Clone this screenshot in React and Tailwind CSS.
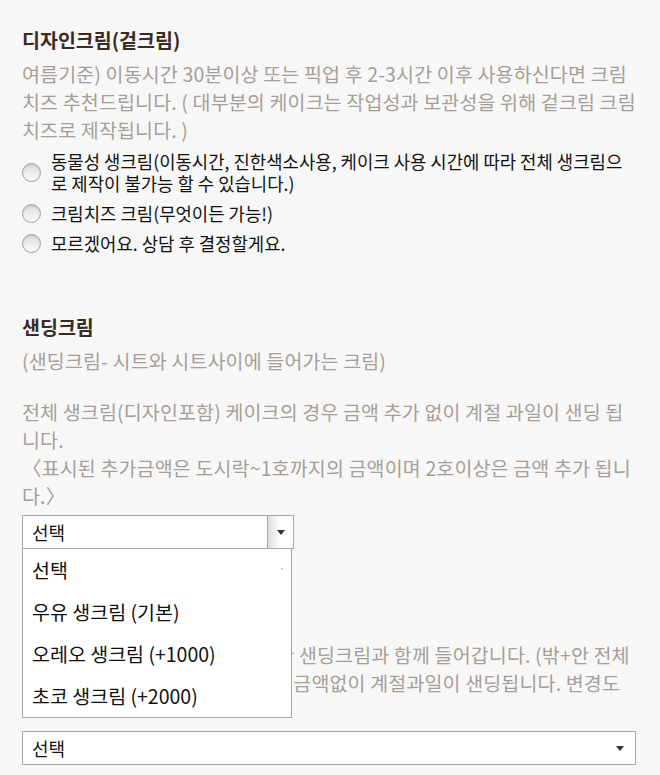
import React from "react";

const radioOptions = [
  "동물성 생크림(이동시간, 진한색소사용, 케이크 사용 시간에 따라 전체 생크림으로 제작이 불가능 할 수 있습니다.)",
  "크림치즈 크림(무엇이든 가능!)",
  "모르겠어요. 상담 후 결정할게요.",
];

const sandingOptions = ["선택", "우유 생크림 (기본)", "오레오 생크림 (+1000)", "초코 생크림 (+2000)"];

const Radio = ({ label }) => (
  <label className="flex items-center gap-[10px] text-[17.8px] leading-[22px] text-[#111]">
    <span className="shrink-0 w-[19px] h-[19px] rounded-full border border-[#a3a3a3] bg-gradient-to-b from-[#dcdcdc] to-[#fbfbfb] shadow-[inset_0_1px_2px_rgba(0,0,0,0.12)]" />
    <span>{label}</span>
  </label>
);

const SelectBox = ({ wide, boxed }) => (
  <div
    className={`flex items-center h-[34px] bg-white border border-[#a6a6a6] ${
      wide ? "w-full" : "w-[272px]"
    }`}
  >
    <span className="flex-1 pl-[9px] text-[18px] text-[#111]">선택</span>
    {boxed ? (
      <span className="flex items-center justify-center w-[26px] h-full border-l border-[#a6a6a6] bg-gradient-to-r from-[#dedede] via-white to-white">
        <span className="w-0 h-0 border-l-[4px] border-r-[4px] border-t-[5px] border-l-transparent border-r-transparent border-t-[#333]" />
      </span>
    ) : (
      <span className="flex items-center justify-center w-[30px] h-full">
        <span className="w-0 h-0 border-l-[4px] border-r-[4px] border-t-[5px] border-l-transparent border-r-transparent border-t-[#333]" />
      </span>
    )}
  </div>
);

export default function App() {
  return (
    <div
      className="min-h-[775px] bg-[#f7f7f7] pl-[22px] pr-[24px] pt-[26px]"
      style={{ fontFamily: '"Noto Sans CJK KR", "Noto Sans", sans-serif' }}
    >
      {/* 디자인크림 */}
      <h3 className="text-[19.5px] leading-[28px] font-bold text-[#3a2a1f]">디자인크림(겉크림)</h3>
      <p className="mt-[6px] text-[19.5px] leading-[28px] tracking-[0.15px] text-[#a69e98]">
        여름기준) 이동시간 30분이상 또는 픽업 후 2-3시간 이후 사용하신다면 크림치즈 추천드립니다. ( 대부분의 케이크는
        작업성과 보관성을 위해 겉크림 크림치즈로 제작됩니다. )
      </p>
      <div className="mt-[6px] flex flex-col gap-[8px]">
        {radioOptions.map((o) => (
          <Radio key={o} label={o} />
        ))}
      </div>

      {/* 샌딩크림 */}
      <h3 className="mt-[59px] text-[19.5px] leading-[28px] font-bold text-[#3a2a1f]">샌딩크림</h3>
      <p className="mt-[6px] text-[19.5px] leading-[28px] tracking-[0.15px] text-[#a69e98]">
        (샌딩크림- 시트와 시트사이에 들어가는 크림)
      </p>
      <p className="mt-[23px] text-[19.5px] leading-[28px] tracking-[0.15px] text-[#a69e98]">
        전체 생크림(디자인포함) 케이크의 경우 금액 추가 없이 계절 과일이 샌딩 됩니다.
        <br />
        〈표시된 추가금액은 도시락~1호까지의 금액이며 2호이상은 금액 추가 됩니다.〉
      </p>
      <div className="relative mt-[5px]">
        <SelectBox boxed />
        <ul className="absolute left-0 top-[33px] z-10 w-[270px] bg-white border border-[#a6a6a6]">
          {sandingOptions.map((o, i) => (
            <li key={o} className="relative h-[42px] flex items-center pl-[9px] text-[19.5px] text-[#111]">
              {o}
              {i === 0 && <span className="absolute right-[8px] top-[19px] w-[2px] h-[2px] bg-[#ccc]" />}
            </li>
          ))}
        </ul>
      </div>

      {/* 과일 샌딩 */}
      <h3 className="mt-[58px] text-[19.5px] leading-[28px] font-bold text-[#3a2a1f]">과일</h3>
      <p className="mt-[6px] text-[19.5px] leading-[28px] tracking-[0.15px] text-[#a69e98] whitespace-nowrap">
        생크림 케이크는, 기본으로 선택한 샌딩크림과 함께 들어갑니다. (밖+안 전체
        <br />
        생크림 케이크들의 경우에는 추가 금액없이 계절과일이 샌딩됩니다. 변경도
      </p>
      <div className="mt-[34px]">
        <SelectBox wide />
      </div>
    </div>
  );
}
